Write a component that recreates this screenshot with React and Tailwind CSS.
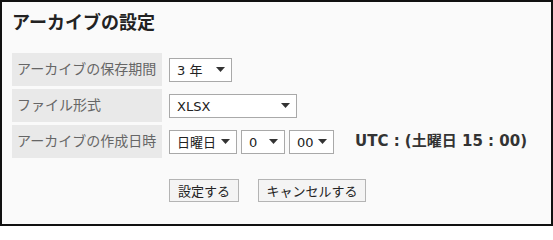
import React from "react";

const jp = { fontFamily: '"DejaVu Sans", "Noto Sans CJK JP", sans-serif' };
const jpOnly = { fontFamily: '"Noto Sans CJK JP", sans-serif' };

function Arrow() {
  return (
    <svg width="9" height="5" viewBox="0 0 9 5" className="shrink-0">
      <polygon points="0,0 9,0 4.5,5" fill="#333" />
    </svg>
  );
}

function Select({ text, w }) {
  return (
    <div
      className={`flex h-[24px] items-center justify-between border border-[#a9a9a9] bg-white pl-[7px] pr-[6px] text-[13px] leading-none text-[#222] ${w}`}
      style={jp}
    >
      <span className="pt-[1px]">{text}</span>
      <Arrow />
    </div>
  );
}

function Row({ label, children }) {
  return (
    <div className="flex h-[33px]">
      <div
        className="flex w-[150px] shrink-0 items-center bg-[#e9e9e9] pl-[5px] pb-[3px] text-[14px] leading-none text-[#666]"
        style={jpOnly}
      >
        {label}
      </div>
      <div className="flex items-center gap-[4px] pl-[7px]">{children}</div>
    </div>
  );
}

function Button({ children, w }) {
  return (
    <div
      className={`flex h-[23px] items-center justify-center border border-[#b4b4b4] bg-[#f4f4f4] text-[13px] leading-none text-[#222] ${w}`}
      style={jpOnly}
    >
      {children}
    </div>
  );
}

export default function App() {
  return (
    <div className="h-[226px] w-[553px] border-2 border-[#111] bg-[#fafafa] pl-[10px] pt-[7px]">
      <div className="text-[18px] font-bold leading-[24px] text-[#222]" style={jpOnly}>
        アーカイブの設定
      </div>
      <div className="mt-[20px] flex flex-col gap-[3px]">
        <Row label="アーカイブの保存期間">
          <Select text="3 年" w="w-[63px]" />
        </Row>
        <Row label="ファイル形式">
          <Select text="XLSX" w="w-[128px]" />
        </Row>
        <Row label="アーカイブの作成日時">
          <Select text="日曜日" w="w-[68px]" />
          <Select text="0" w="w-[44px]" />
          <Select text="00" w="w-[45px]" />
          <span className="ml-[17px] pb-[1px] text-[15px] font-bold text-[#333]" style={jp}>
            UTC : (土曜日 15 : 00)
          </span>
        </Row>
      </div>
      <div className="mt-[21px] flex gap-[19px] pl-[157px]">
        <Button w="w-[70px]">設定する</Button>
        <Button w="w-[108px]">キャンセルする</Button>
      </div>
    </div>
  );
}
